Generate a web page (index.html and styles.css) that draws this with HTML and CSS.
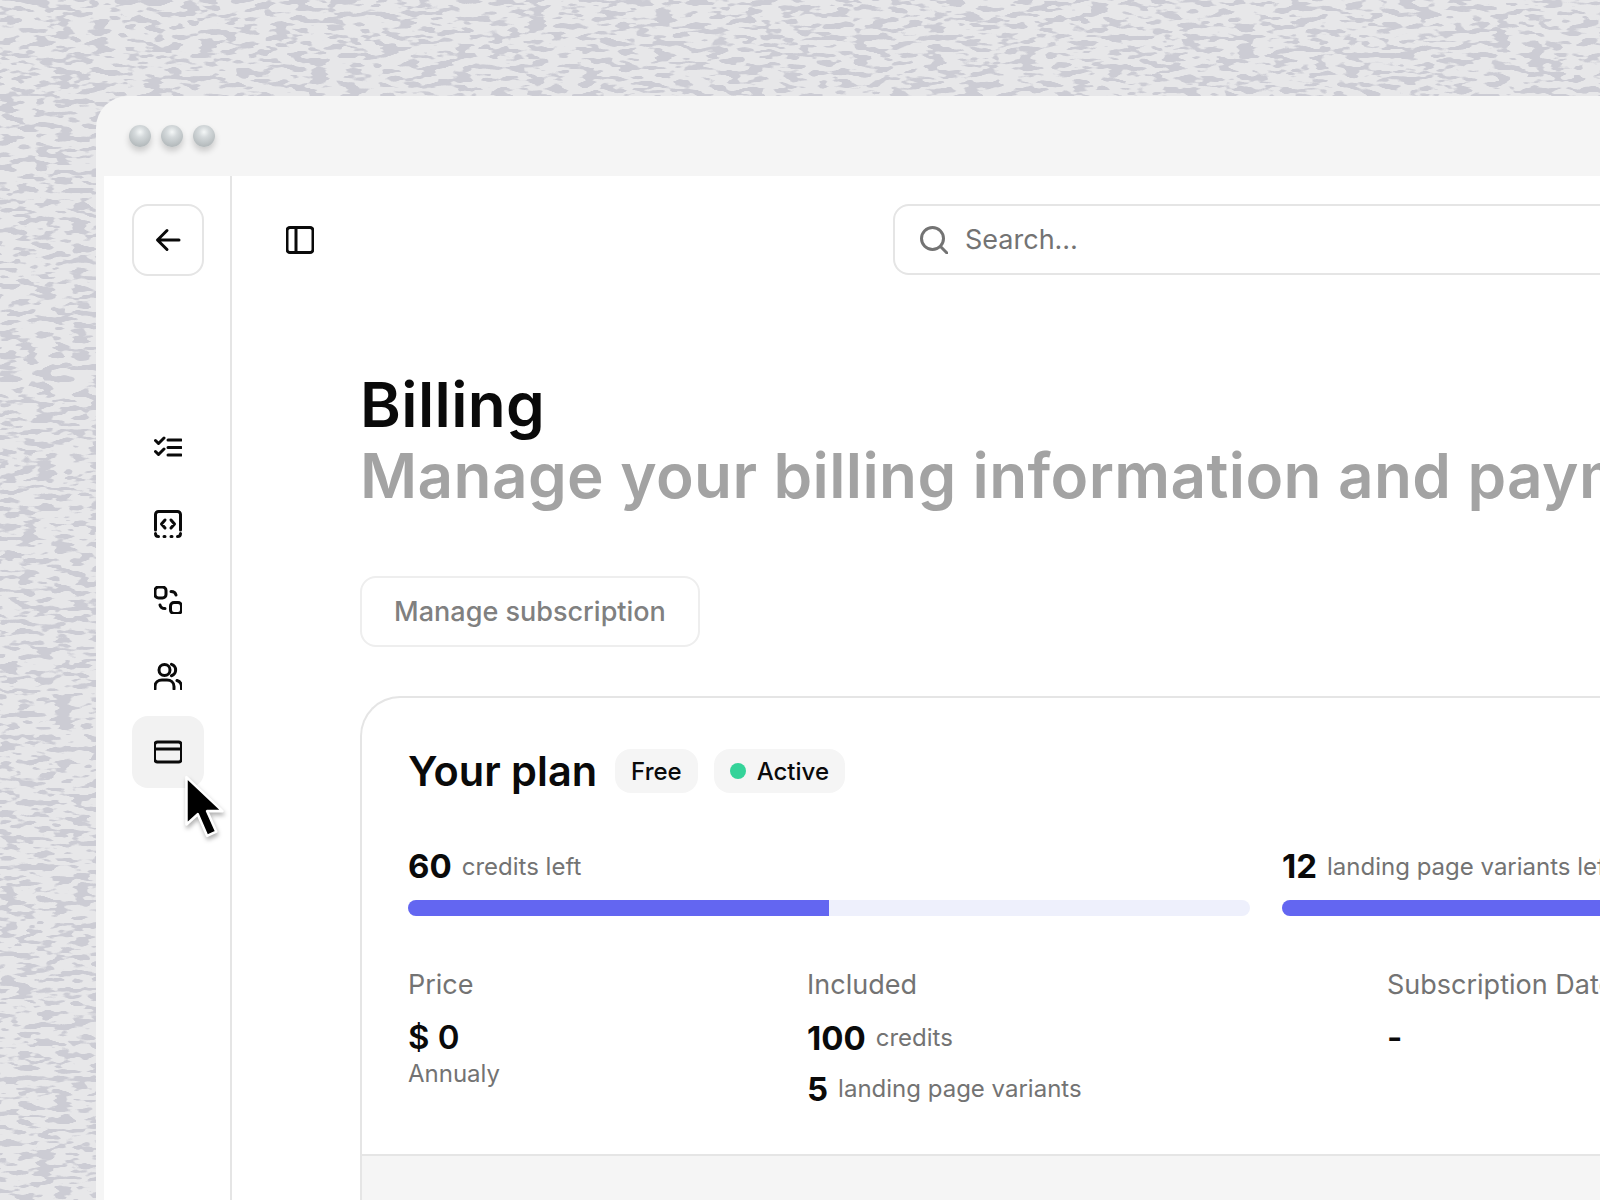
FILE: index.html
```html
<!DOCTYPE html>
<html lang="en">

<head>
    <meta charset="UTF-8">
    <meta name="viewport" content="width=device-width, initial-scale=1.0">
    <title>Billing</title>
    <link rel="stylesheet" href="styles.css">
</head>

<body>
    <!-- fingerprint-like texture behind the window -->
    <svg class="texture" width="1600" height="1200" aria-hidden="true">
        <filter id="ridges" x="0" y="0" width="100%" height="100%" color-interpolation-filters="sRGB">
            <feTurbulence type="fractalNoise" baseFrequency="0.055 0.17" numOctaves="2" seed="7" />
            <feColorMatrix type="matrix" values="0 0 0 0 0.8  0 0 0 0 0.8  0 0 0 0 0.83  3.2 3.2 0 0 -3.2" />
            <feComponentTransfer>
                <feFuncA type="linear" slope="4" intercept="-0.2" />
            </feComponentTransfer>
        </filter>
        <rect width="1600" height="1200" fill="#e7e7e9" />
        <rect width="1600" height="1200" filter="url(#ridges)" />
    </svg>

    <div class="window">
        <div class="titlebar">
            <span class="pearl"></span>
            <span class="pearl"></span>
            <span class="pearl"></span>
        </div>

        <div class="frame">
            <aside class="sidebar">
                <button class="back-btn">
                    <svg class="icon" viewBox="0 0 28 28">
                        <path d="M25 14H4M13 4.500 3.500 14l9.500 9.500" />
                    </svg>
                </button>

                <nav class="nav">
                    <a class="nav-item">
                        <svg class="icon" viewBox="0 0 28 28">
                            <path d="M1.500 6.500l3 3L10 4M1.500 17.500l3 3L10 15M14 6h13M14 13.500h13M14 21h13" />
                        </svg>
                    </a>
                    <a class="nav-item">
                        <svg class="icon" viewBox="0 0 28 28">
                            <path d="M1.500 20V4.500a3 3 0 0 1 3-3h19a3 3 0 0 1 3 3V20" />
                            <path d="M1.500 23.500c0 2 1 3 3 3M26.500 23.500c0 2-1 3-3 3M10 26.500h1M17 26.500h1" />
                            <path d="M11 10 7.500 14l3.500 4M17 10l3.500 4-3.500 4" />
                        </svg>
                    </a>
                    <a class="nav-item">
                        <svg class="icon" viewBox="0 0 28 28">
                            <rect x="1" y="1" width="11" height="11" rx="3.500" />
                            <rect x="16.500" y="16.500" width="11" height="11" rx="3.500" />
                            <path d="M17 5.500c2.500 0 4.500 1 5 3.500M11 22.500c-2.500 0-4.500-1-5-3.500" />
                        </svg>
                    </a>
                    <a class="nav-item">
                        <svg class="icon" viewBox="0 0 28 28">
                            <circle cx="10.500" cy="8" r="5.500" />
                            <path d="M1 27v-2.500C1 20 4.500 18 8 18h5c3.500 0 7 2 7 6.500V27" />
                            <path d="M17.500 2.300a6 6 0 0 1 0 11.400M23 18.500c2.500.8 4.500 3 4.500 6V27" />
                        </svg>
                    </a>
                    <a class="nav-item active">
                        <svg class="icon" viewBox="0 0 28 28">
                            <rect x="0.500" y="4" width="27" height="20" rx="3" />
                            <path d="M0.500 11h27" />
                        </svg>
                    </a>
                </nav>

                <svg class="cursor" width="46" height="68" viewBox="0 0 44 66">
                    <path d="M4 3v46l11-10 9 21 9-4-9-20h15z" fill="#000" stroke="#fff" stroke-width="2.500" stroke-linejoin="round" />
                </svg>
            </aside>

            <main class="main">
                <div class="topbar">
                    <svg class="icon panel-icon" viewBox="0 0 28 28">
                        <rect x="1" y="1.500" width="26" height="25" rx="3" />
                        <path d="M10 1.500v25" />
                    </svg>
                    <div class="search">
                        <svg class="icon search-icon" viewBox="0 0 28 28">
                            <circle cx="12.500" cy="12.500" r="11" />
                            <path d="M20.500 20.500 27 27" />
                        </svg>
                        <span>Search…</span>
                    </div>
                </div>

                <section class="content">
                    <h1 class="heading">Billing</h1>
                    <p class="subheading">Manage your billing information and payments</p>

                    <button class="manage-btn">Manage subscription</button>

                    <div class="plan-card">
                        <div class="plan-body">
                            <div class="plan-head">
                                <h2 class="plan-title">Your plan</h2>
                                <span class="chip">Free</span>
                                <span class="chip"><i class="dot"></i>Active</span>
                            </div>

                            <div class="usage">
                                <div>
                                    <div class="stat"><b>60</b><span>credits left</span></div>
                                    <div class="bar"><div class="bar-fill" style="width: 50%"></div></div>
                                </div>
                                <div>
                                    <div class="stat"><b>12</b><span>landing page variants left</span></div>
                                    <div class="bar"><div class="bar-fill" style="width: 80%"></div></div>
                                </div>
                            </div>

                            <div class="details">
                                <div>
                                    <p class="label">Price</p>
                                    <p class="price">$ 0</p>
                                    <p class="note">Annualy</p>
                                </div>
                                <div>
                                    <p class="label">Included</p>
                                    <div class="stat included"><b>100</b><span>credits</span></div>
                                    <div class="stat included"><b>5</b><span>landing page variants</span></div>
                                </div>
                                <div>
                                    <p class="label">Subscription Date</p>
                                    <p class="price">-</p>
                                </div>
                            </div>
                        </div>
                        <div class="plan-foot"></div>
                    </div>
                </section>
            </main>
        </div>
    </div>
</body>

</html>
```

FILE: styles.css
```css
* {
    box-sizing: border-box;
}

html,
body {
    margin: 0;
    height: 1200px;
    overflow: hidden;
}

body {
    padding: 96px 0 0 96px;
    font-family: "Inter", "Liberation Sans", sans-serif;
    color: #0a0a0a;
}

.texture {
    position: absolute;
    top: 0;
    left: 0;
    z-index: -1;
}

p,
h1,
h2 {
    margin: 0;
}

.window {
    width: 2000px;
    height: 1104px;
    padding-left: 8px;
    background: #f5f5f5;
    border-top-left-radius: 32px;
}

.titlebar {
    display: flex;
    align-items: center;
    gap: 10px;
    height: 80px;
    padding-left: 25px;
}

.pearl {
    width: 22px;
    height: 22px;
    border-radius: 50%;
    background: radial-gradient(circle at 50% 32%, #f4f7f7 0%, #d5dadc 28%, #b7bdbf 72%, #a7adaf 100%);
    box-shadow: 0 4px 6px rgba(0, 0, 0, 0.18);
}

.frame {
    display: flex;
    height: 1024px;
    background: #fff;
}

.icon {
    display: block;
    width: 28px;
    height: 28px;
    fill: none;
    stroke: #0a0a0a;
    stroke-width: 3;
    stroke-linecap: round;
    stroke-linejoin: round;
}

.sidebar {
    position: relative;
    flex: none;
    width: 128px;
    padding: 28px 28px 0 28px;
    border-right: 2px solid #e5e5e5;
}

.back-btn {
    display: flex;
    align-items: center;
    justify-content: center;
    width: 72px;
    height: 72px;
    padding: 0;
    background: #fff;
    border: 2px solid #e5e5e5;
    border-radius: 16px;
}

.nav {
    display: flex;
    flex-direction: column;
    gap: 4px;
    margin-top: 136px;
}

.nav-item {
    display: flex;
    align-items: center;
    justify-content: center;
    width: 72px;
    height: 72px;
    border-radius: 16px;
}

.nav-item.active {
    background: #f2f2f2;
}

.cursor {
    position: absolute;
    top: 598px;
    left: 78px;
    filter: drop-shadow(1px 3px 2px rgba(0, 0, 0, 0.3));
}

.main {
    flex: 1;
}

.topbar {
    display: flex;
    align-items: center;
    padding: 28px 0 0 54px;
}

.panel-icon {
    margin-right: 579px;
}

.search {
    display: flex;
    align-items: center;
    gap: 17px;
    width: 1000px;
    height: 71px;
    padding-left: 25px;
    border: 2px solid #e5e5e5;
    border-radius: 16px;
    font-size: 27px;
    color: #737373;
}

.search-icon {
    stroke: #737373;
}

.content {
    padding: 94px 0 0 128px;
}

.heading {
    font-size: 62px;
    line-height: 71px;
    font-weight: 600;
    letter-spacing: 0.4px;
}

.subheading {
    font-size: 62px;
    line-height: 72px;
    font-weight: 600;
    letter-spacing: 0.4px;
    color: #a3a3a3;
    white-space: nowrap;
}

.manage-btn {
    display: block;
    width: 340px;
    height: 71px;
    margin-top: 64px;
    background: #fff;
    border: 2px solid #eee;
    border-radius: 16px;
    font-family: inherit;
    font-size: 27px;
    font-weight: 500;
    color: #808080;
}

.plan-card {
    width: 1500px;
    margin-top: 49px;
    border: 2px solid #e5e5e5;
    border-right: 0;
    border-radius: 40px 0 0 0;
    overflow: hidden;
}

.plan-body {
    padding: 45px 46px 0;
    height: 456px;
}

.plan-foot {
    height: 60px;
    background: #f5f5f5;
    border-top: 2px solid #e5e5e5;
}

.plan-head {
    display: flex;
    align-items: center;
    gap: 16px;
    height: 56px;
}

.plan-title {
    margin-right: 2px;
    font-size: 41.5px;
    font-weight: 600;
    letter-spacing: 0;
}

.chip {
    display: flex;
    align-items: center;
    gap: 11px;
    height: 44px;
    padding: 0 16px;
    background: #f5f5f5;
    border-radius: 16px;
    font-size: 24px;
    font-weight: 500;
}

.dot {
    width: 16px;
    height: 16px;
    border-radius: 50%;
    background: #34d399;
}

.usage {
    display: grid;
    grid-template-columns: 842px 842px;
    gap: 32px;
    margin-top: 47px;
}

.stat {
    display: flex;
    align-items: center;
    gap: 10px;
    font-size: 24px;
    color: #737373;
}

.stat b {
    font-size: 33px;
    font-weight: 700;
    color: #0a0a0a;
}

.bar {
    height: 16px;
    margin-top: 14px;
    background: #eef0fc;
    border-radius: 8px;
    overflow: hidden;
}

.bar-fill {
    height: 100%;
    background: #6366f1;
}

.details {
    display: grid;
    grid-template-columns: 399px 580px 1fr;
    margin-top: 52px;
}

.label {
    font-size: 27px;
    line-height: 34px;
    color: #737373;
}

.price {
    margin-top: 14px;
    font-size: 33px;
    line-height: 42px;
    font-weight: 600;
}

.note {
    font-size: 24px;
    line-height: 32px;
    color: #737373;
}

.included {
    margin-top: 16px;
    line-height: 40px;
}

.included + .included {
    margin-top: 11px;
}
```
